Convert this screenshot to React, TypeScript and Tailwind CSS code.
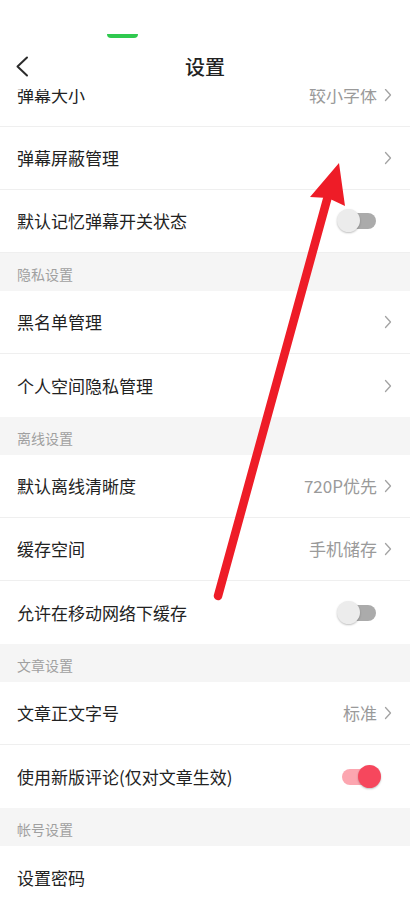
import React from 'react';

type Row = {
  label: string;
  value?: string;
  arrow?: boolean;
  toggle?: 'on' | 'off';
};

type Section = {
  title?: string;
  rows: Row[];
};

const sections: Section[] = [
  {
    rows: [
      { label: '弹幕大小', value: '较小字体', arrow: true },
      { label: '弹幕屏蔽管理', arrow: true },
      { label: '默认记忆弹幕开关状态', toggle: 'off' },
    ],
  },
  {
    title: '隐私设置',
    rows: [
      { label: '黑名单管理', arrow: true },
      { label: '个人空间隐私管理', arrow: true },
    ],
  },
  {
    title: '离线设置',
    rows: [
      { label: '默认离线清晰度', value: '720P优先', arrow: true },
      { label: '缓存空间', value: '手机储存', arrow: true },
      { label: '允许在移动网络下缓存', toggle: 'off' },
    ],
  },
  {
    title: '文章设置',
    rows: [
      { label: '文章正文字号', value: '标准', arrow: true },
      { label: '使用新版评论(仅对文章生效)', toggle: 'on' },
    ],
  },
  {
    title: '帐号设置',
    rows: [{ label: '设置密码' }],
  },
];

function Chevron() {
  return (
    <svg width="8" height="14" viewBox="0 0 8 14" fill="none">
      <polyline points="1.5,1.5 6.5,7 1.5,12.5" stroke="#a3a3a3" strokeWidth="1.3" strokeLinecap="round" strokeLinejoin="round" />
    </svg>
  );
}

// switch: 34px track with a 23px knob that overhangs the ends
function Toggle({ on }: { on: boolean }) {
  return (
    <div className="relative w-[44px] h-[24px]">
      <div className={`absolute left-[5px] right-[5px] top-[4px] h-[16px] rounded-full ${on ? 'bg-[#fca6b0]' : 'bg-[#ababab]'}`} />
      <div
        className={`absolute top-0 w-[23px] h-[23px] rounded-full shadow-[0_1px_2px_rgba(0,0,0,0.25)] ${
          on ? 'right-0 bg-[#f6475d]' : 'left-0 bg-[#ececec]'
        }`}
      />
    </div>
  );
}

function SettingRow({ row, last, first }: { row: Row; last: boolean; first: boolean }) {
  return (
    <div
      className={`flex items-center h-[63px] pl-[17px] bg-white ${last ? '' : 'border-b border-[#efefef]'} ${
        row.toggle ? 'pr-[29px]' : 'pr-[18px]'
      } ${first ? '-mt-[25px]' : ''}`}
    >
      <span className="flex-1 text-[17px] text-[#222]">{row.label}</span>
      {row.value && <span className="text-[17px] text-[#9a9a9a] mr-[7px]">{row.value}</span>}
      {row.arrow && <Chevron />}
      {row.toggle && <Toggle on={row.toggle === 'on'} />}
    </div>
  );
}

export default function App() {
  return (
    <div className="relative w-[410px] h-[914px] overflow-hidden bg-white font-['Noto_Sans_CJK_SC',sans-serif]">
      {/* status bar */}
      <div className="relative z-10 h-[40px] bg-white pt-[34px] pl-[107px]">
        <div className="w-[31px] h-[4px] bg-[#2fc94f] rounded-b-[4px]" />
      </div>

      {/* title bar */}
      <div className="relative z-10 grid grid-cols-[1fr_auto_1fr] items-center h-[49px] pt-[4px] bg-white">
        <div className="pl-[15px]">
          <svg width="14" height="21" viewBox="0 0 14 21" fill="none">
            <polyline points="12,1.5 2.5,10.5 12,19.5" stroke="#2b2b2b" strokeWidth="2" strokeLinecap="round" strokeLinejoin="round" />
          </svg>
        </div>
        <span className="text-[20px] text-[#222] font-medium">设置</span>
        <div />
      </div>

      {/* list */}
      <div className="overflow-hidden">
        {sections.map((section, si) => (
          <div key={si}>
            {section.title && (
              <div className="flex items-center h-[38px] px-[17px] pt-[5px] bg-[#f5f5f5] text-[14px] text-[#a0a0a0]">
                {section.title}
              </div>
            )}
            {section.rows.map((row, ri) => (
              <SettingRow
                key={row.label}
                row={row}
                first={si === 0 && ri === 0}
                last={ri === section.rows.length - 1 && si > 0}
              />
            ))}
          </div>
        ))}
      </div>

      {/* red annotation arrow */}
      <svg className="absolute left-0 top-0 z-20 pointer-events-none" width="410" height="914" viewBox="0 0 410 914">
        <line x1="218" y1="596" x2="328" y2="196" stroke="#ee1c27" strokeWidth="8.5" strokeLinecap="round" />
        <polygon points="339,163 345,206 328,198 310,197" fill="#ee1c27" />
      </svg>
    </div>
  );
}
